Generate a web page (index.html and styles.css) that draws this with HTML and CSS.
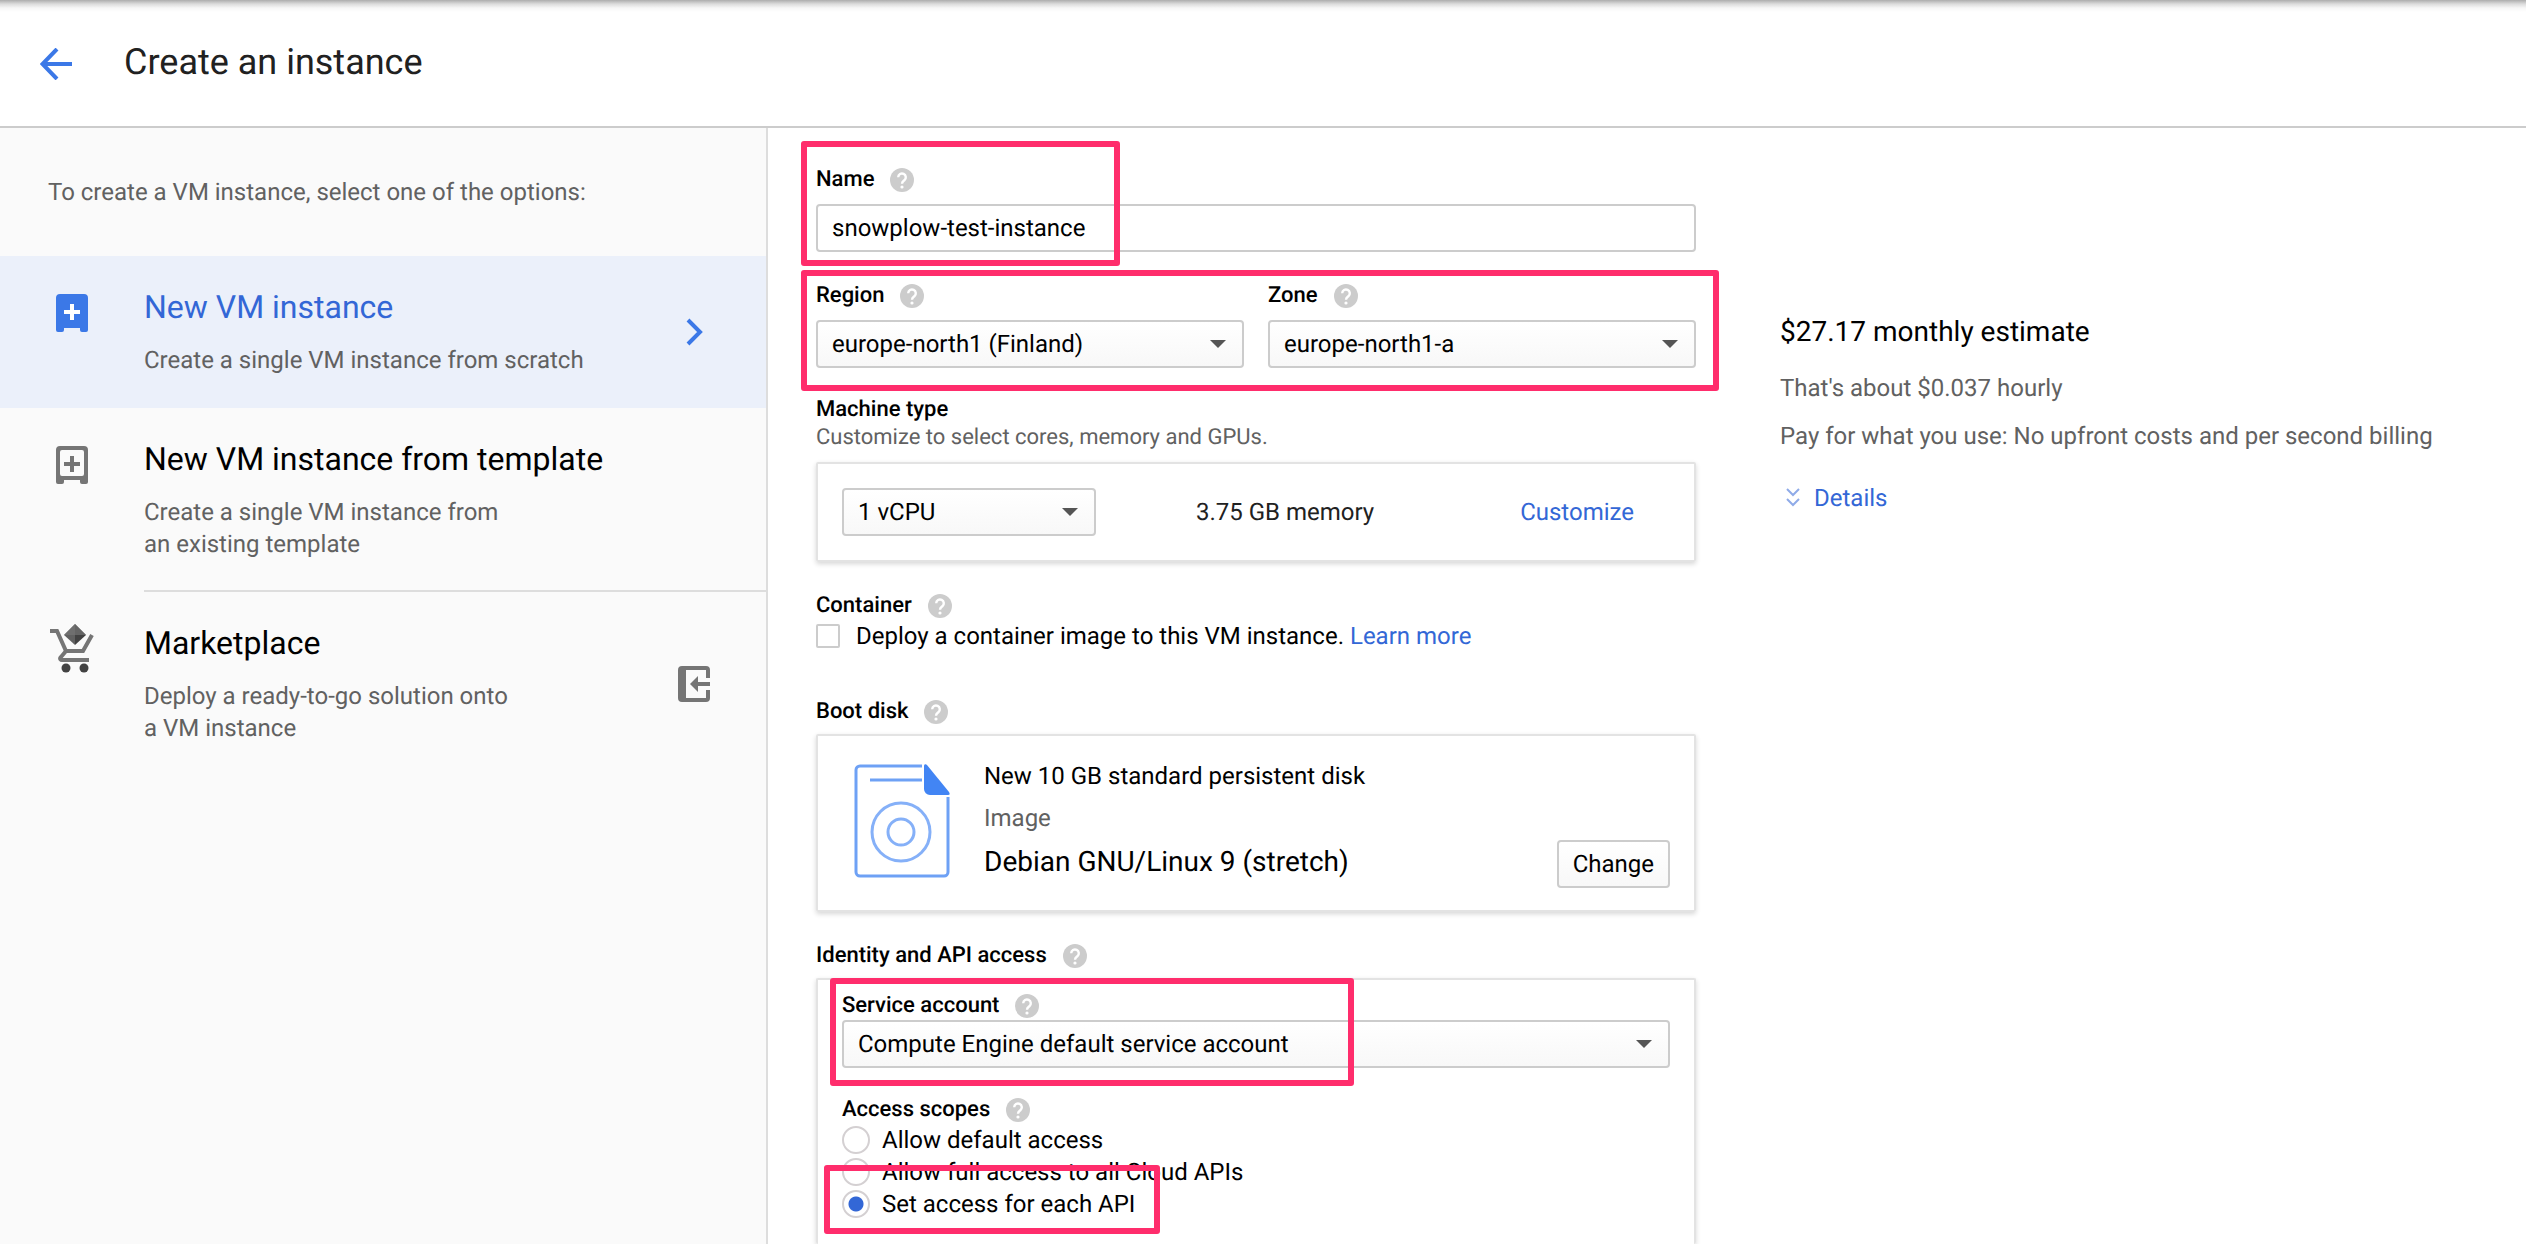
FILE: index.html
```html
<!DOCTYPE html>
<html lang="en">
<head>
<meta charset="utf-8">
<title>Create an instance</title>
<link rel="stylesheet" href="styles.css">
</head>
<body>
<svg class="sprite" aria-hidden="true">
  <symbol id="help" viewBox="0 0 24 24">
    <circle cx="12" cy="12" r="12" fill="#ccc"/>
    <path d="M8.200 9.200a3.800 3.800 0 1 1 6.200 3c-1.400 1.100-2.400 1.600-2.400 3.600" fill="none" stroke="#fff" stroke-width="2.400"/>
    <circle cx="12" cy="19" r="1.600" fill="#fff"/>
  </symbol>
</svg>
<header class="topbar">
  <a class="back" href="#" aria-label="Back">
    <svg width="32" height="32" viewBox="0 0 32 32"><path d="M17 1L2.500 16 17 31M3 16h29" fill="none" stroke="#3b78e7" stroke-width="4"/></svg>
  </a>
  <h1>Create an instance</h1>
</header>
<div class="shell">
  <nav class="sidebar">
    <p class="intro">To create a VM instance, select one of the options:</p>
    <a class="option selected" href="#">
      <svg class="option-icon" width="48" height="48" viewBox="0 0 48 48"><path d="M8 10a4 4 0 0 1 4-4h24a4 4 0 0 1 4 4v32a2 2 0 0 1-2 2h-4a2 2 0 0 1-2-2v-2H16v2a2 2 0 0 1-2 2h-4a2 2 0 0 1-2-2z" fill="#3b78e7"/><path d="M24 16v16M16 24h16" stroke="#fff" stroke-width="4"/></svg>
      <span class="option-text"><strong>New VM instance</strong><span>Create a single VM instance from scratch</span></span>
      <svg class="option-end" width="32" height="32" viewBox="0 0 32 32"><path d="M10 4l12 12L10 28" fill="none" stroke="#3b78e7" stroke-width="4"/></svg>
    </a>
    <a class="option divided" href="#">
      <svg class="option-icon" width="48" height="48" viewBox="0 0 48 48"><path fill-rule="evenodd" d="M8 10a4 4 0 0 1 4-4h24a4 4 0 0 1 4 4v32a2 2 0 0 1-2 2h-4a2 2 0 0 1-2-2v-2H16v2a2 2 0 0 1-2 2h-4a2 2 0 0 1-2-2zM14 10a2 2 0 0 0-2 2v22a2 2 0 0 0 2 2h20a2 2 0 0 0 2-2V12a2 2 0 0 0-2-2z" fill="#757575"/><path d="M24 16v16M16 24h16" stroke="#757575" stroke-width="4"/></svg>
      <span class="option-text"><strong>New VM instance from template</strong><span>Create a single VM instance from<br>an existing template</span></span>
    </a>
    <a class="option" href="#">
      <svg class="option-icon" width="48" height="52" viewBox="0 0 48 52"><path d="M2 7h7l9 20h17l9-16" fill="none" stroke="#757575" stroke-width="4"/><path d="M18 27l-5 6c-2 2 0 3 1 3h27" fill="none" stroke="#757575" stroke-width="4"/><path d="M27 0L16 11l11 10z" fill="#616161"/><path d="M27 0l11 11-11 10z" fill="#424242"/><path d="M27 0L16 11h22z" fill="#757575" opacity=".7"/><circle cx="18" cy="44" r="4.500" fill="#424242"/><circle cx="36" cy="44" r="4.500" fill="#424242"/></svg>
      <span class="option-text"><strong>Marketplace</strong><span>Deploy a ready-to-go solution onto<br>a VM instance</span></span>
      <svg class="option-end" width="32" height="36" viewBox="0 0 32 36"><path d="M30 12V4a2 2 0 0 0-2-2H4a2 2 0 0 0-2 2v28a2 2 0 0 0 2 2h24a2 2 0 0 0 2-2v-8" fill="none" stroke="#757575" stroke-width="4"/><path d="M2 2h6v32H2z" fill="#757575"/><path d="M12 18l8-8v6h12v4H20v6z" fill="#757575"/></svg>
    </a>
  </nav>
  <main class="content">
    <form class="form">
      <div class="field marked mark-name">
        <div class="label-row"><label for="name">Name</label><svg class="help"><use href="#help"/></svg></div>
        <input class="text-input" id="name" type="text" value="snowplow-test-instance">
      </div>
      <div class="field pair marked mark-region">
        <div>
          <div class="label-row"><label for="region">Region</label><svg class="help"><use href="#help"/></svg></div>
          <div class="select"><select id="region"><option>europe-north1 (Finland)</option></select></div>
        </div>
        <div>
          <div class="label-row"><label for="zone">Zone</label><svg class="help"><use href="#help"/></svg></div>
          <div class="select"><select id="zone"><option>europe-north1-a</option></select></div>
        </div>
      </div>
      <section class="machine">
        <label class="heading" for="cpu">Machine type</label>
        <p class="caption">Customize to select cores, memory and GPUs.</p>
        <div class="card machine-card">
          <div class="select"><select id="cpu"><option>1 vCPU</option></select></div>
          <span class="memory">3.75 GB memory</span>
          <a href="#">Customize</a>
        </div>
      </section>
      <section class="container-section">
        <div class="label-row tight"><h2>Container</h2><svg class="help"><use href="#help"/></svg></div>
        <div class="check-row"><input type="checkbox" id="deploy"><label for="deploy">Deploy a container image to this VM instance.</label><a href="#">Learn more</a></div>
      </section>
      <section class="boot">
        <div class="label-row above-card"><h2>Boot disk</h2><svg class="help"><use href="#help"/></svg></div>
        <div class="card boot-card">
          <svg class="disk" width="96" height="114" viewBox="0 0 96 114"><path d="M68 2H6a4 4 0 0 0-4 4v102a4 4 0 0 0 4 4h84a4 4 0 0 0 4-4V33M16 16h52" fill="none" stroke="#6ea1f5" stroke-width="3"/><path d="M70 2c0-2 2-2 3-1l22 27c1 2 1 3-1 3H76a6 6 0 0 1-6-6z" fill="#4285f4"/><circle cx="47" cy="68" r="29" fill="none" stroke="#85b0f8" stroke-width="3"/><circle cx="47" cy="68" r="13" fill="none" stroke="#85b0f8" stroke-width="3"/></svg>
          <div class="disk-text"><span>New 10 GB standard persistent disk</span><span class="muted">Image</span><span class="large">Debian GNU/Linux 9 (stretch)</span></div>
          <button class="button" type="button">Change</button>
        </div>
      </section>
      <section class="identity">
        <div class="label-row above-card"><h2>Identity and API access</h2><svg class="help"><use href="#help"/></svg></div>
        <div class="card identity-card">
          <div class="marked mark-account">
            <div class="label-row tight"><label for="account">Service account</label><svg class="help"><use href="#help"/></svg></div>
            <div class="select"><select id="account"><option>Compute Engine default service account</option></select></div>
          </div>
          <fieldset class="scopes">
            <legend class="label-row"><span>Access scopes</span><svg class="help"><use href="#help"/></svg></legend>
            <div class="radio-row"><input type="radio" name="scope" id="s1"><label for="s1">Allow default access</label></div>
            <div class="radio-row"><input type="radio" name="scope" id="s2"><label for="s2">Allow full access to all Cloud APIs</label></div>
            <div class="radio-row marked mark-scope"><input type="radio" name="scope" id="s3" checked><label for="s3">Set access for each API</label></div>
          </fieldset>
        </div>
      </section>
    </form>
    <aside class="estimate">
      <h2>$27.17 monthly estimate</h2>
      <p>That's about $0.037 hourly</p>
      <p>Pay for what you use: No upfront costs and per second billing</p>
      <a class="details" href="#"><svg width="14" height="20" viewBox="0 0 14 20"><path d="M1 1l6 6 6-6M1 11l6 6 6-6" fill="none" stroke="#8fabe8" stroke-width="2"/></svg>Details</a>
    </aside>
  </main>
</div>
</body>
</html>
```
FILE: styles.css
```css
* { box-sizing: border-box; }

body {
  margin: 0;
  min-height: 100vh;
  display: flex;
  flex-direction: column;
  font: 24px/32px Roboto, "Liberation Sans", sans-serif;
  text-rendering: geometricPrecision;
  color: #000;
  background: #fff;
}

h1, h2, p { margin: 0; font-weight: 400; }
a { color: #3367d6; text-decoration: none; }
svg { flex: none; }
.sprite { position: absolute; width: 0; height: 0; }

.topbar {
  display: flex;
  align-items: center;
  gap: 52px;
  height: 128px;
  padding: 2px 40px 0;
  border-bottom: 2px solid #ccc;
  background: linear-gradient(#adadad, #dcdcdc 4px, #f7f7f7 8px, #fff 12px);
}
.back { display: flex; }
h1 { font-size: 36px; line-height: 48px; padding-bottom: 4px; color: #212121; }

.shell { flex: 1; display: flex; }

.sidebar {
  flex: 0 1 768px;
  background: #fafafa;
  border-right: 2px solid #ddd;
}
.intro { padding: 48px; color: #616161; }
.option {
  display: flex;
  padding: 32px 56px 32px 48px;
  color: #616161;
}
.option-icon { width: 48px; }
.option-text { flex: 1; padding-left: 48px; }
.option-text strong {
  display: block;
  font-size: 32px;
  line-height: 38px;
  font-weight: 400;
  color: #000;
  margin-bottom: 18px;
}
.option-end { align-self: center; }
.selected { background: #ebf0fa; }
.selected strong { color: #3367d6; }
.divided { background: linear-gradient(#ddd, #ddd) 144px 100% / 100% 2px no-repeat; }

.content { flex: 1; display: flex; gap: 84px; padding-left: 48px; }
.form {
  flex: 0 1 880px;
  display: flex;
  flex-direction: column;
  padding-top: 40px;
}

.label-row { display: flex; align-items: center; gap: 16px; height: 24px; margin-bottom: 12px; }
.label-row label, .label-row h2, .label-row span, .heading {
  font-size: 22px;
  line-height: 24px;
  font-weight: 500;
}
.label-row.tight { margin-bottom: 2px; }
.label-row.above-card { margin-bottom: 10px; }
.help { width: 24px; height: 24px; }
.field { margin-bottom: 32px; }
.pair { display: grid; grid-template-columns: 1fr 1fr; gap: 24px; margin-bottom: 28px; }

.text-input, select, .button {
  display: block;
  height: 48px;
  border: 2px solid #ccc;
  border-radius: 4px;
  padding: 0 14px;
  font: inherit;
  text-rendering: inherit;
  color: #000;
  background: #fff;
}
.text-input, select { width: 100%; }
select, .button { appearance: none; background: linear-gradient(#fff, #f8f8f8); }
.select { position: relative; }
.select::after {
  content: "";
  position: absolute;
  right: 18px;
  top: 20px;
  border: 8px solid transparent;
  border-top-color: #555;
  border-bottom: 0;
}

/* Pink callout frames laid over the fields */
.marked { position: relative; }
.marked::before {
  content: "";
  position: absolute;
  z-index: 1;
  border: 6px solid #ff2d6c;
  border-radius: 3px;
  pointer-events: none;
}
.mark-name::before { inset: -27px 576px -14px -15px; }
.mark-region::before { inset: -14px -23px -23px -15px; }
.mark-account::before { inset: -16px 316px -18px -12px; }
.mark-scope::before { inset: -23px 510px -14px -18px; }

.machine .heading { display: block; line-height: 28px; }
.caption { font-size: 22px; line-height: 28px; color: #616161; }
.card {
  border: 2px solid #e3e3e3;
  border-radius: 2px;
  box-shadow: 0 2px 5px rgba(0, 0, 0, .16);
}
.machine-card { display: flex; align-items: center; margin-top: 10px; padding: 24px 60px 24px 24px; }
.machine-card .select { width: 254px; }
.memory { flex: 1; padding-left: 100px; color: #212121; }

.container-section { margin-top: 32px; }
.check-row { display: flex; align-items: center; gap: 6px; height: 32px; }
.check-row input {
  appearance: none;
  width: 24px;
  height: 24px;
  margin: 0 10px 0 0;
  border: 2px solid #ccc;
  border-radius: 2px;
}

.boot { margin-top: 48px; }
.boot-card { display: flex; padding: 24px 24px 22px 36px; }
.disk { margin-top: 4px; }
.disk-text {
  flex: 1;
  display: flex;
  flex-direction: column;
  gap: 10px;
  padding: 0 0 8px 34px;
}
.muted { color: #616161; }
.large { font-size: 28px; line-height: 36px; }
.button { align-self: flex-end; }

.identity { flex: 1; display: flex; flex-direction: column; margin-top: 32px; }
.identity .label-row { flex: none; }
.identity-card { flex: 1; border-bottom: 0; padding: 14px 24px 20px; }
.scopes { margin: 30px 0 0; padding: 0; border: 0; }
.scopes .label-row { margin-bottom: 2px; padding: 0; }
.radio-row { display: flex; align-items: center; gap: 12px; height: 32px; }
.radio-row input {
  appearance: none;
  width: 28px;
  height: 28px;
  margin: 0;
  border: 2px solid #d4d0d2;
  border-radius: 50%;
}
.radio-row input:checked { background: radial-gradient(#3367d6 7px, #fff 8px); }

.estimate { flex: 1; padding-top: 184px; }
.estimate h2 { font-size: 28px; line-height: 40px; margin-bottom: 20px; }
.estimate p { color: #616161; margin-bottom: 16px; }
.details { display: inline-flex; align-items: center; gap: 14px; margin-top: 14px; padding-left: 6px; }
```
